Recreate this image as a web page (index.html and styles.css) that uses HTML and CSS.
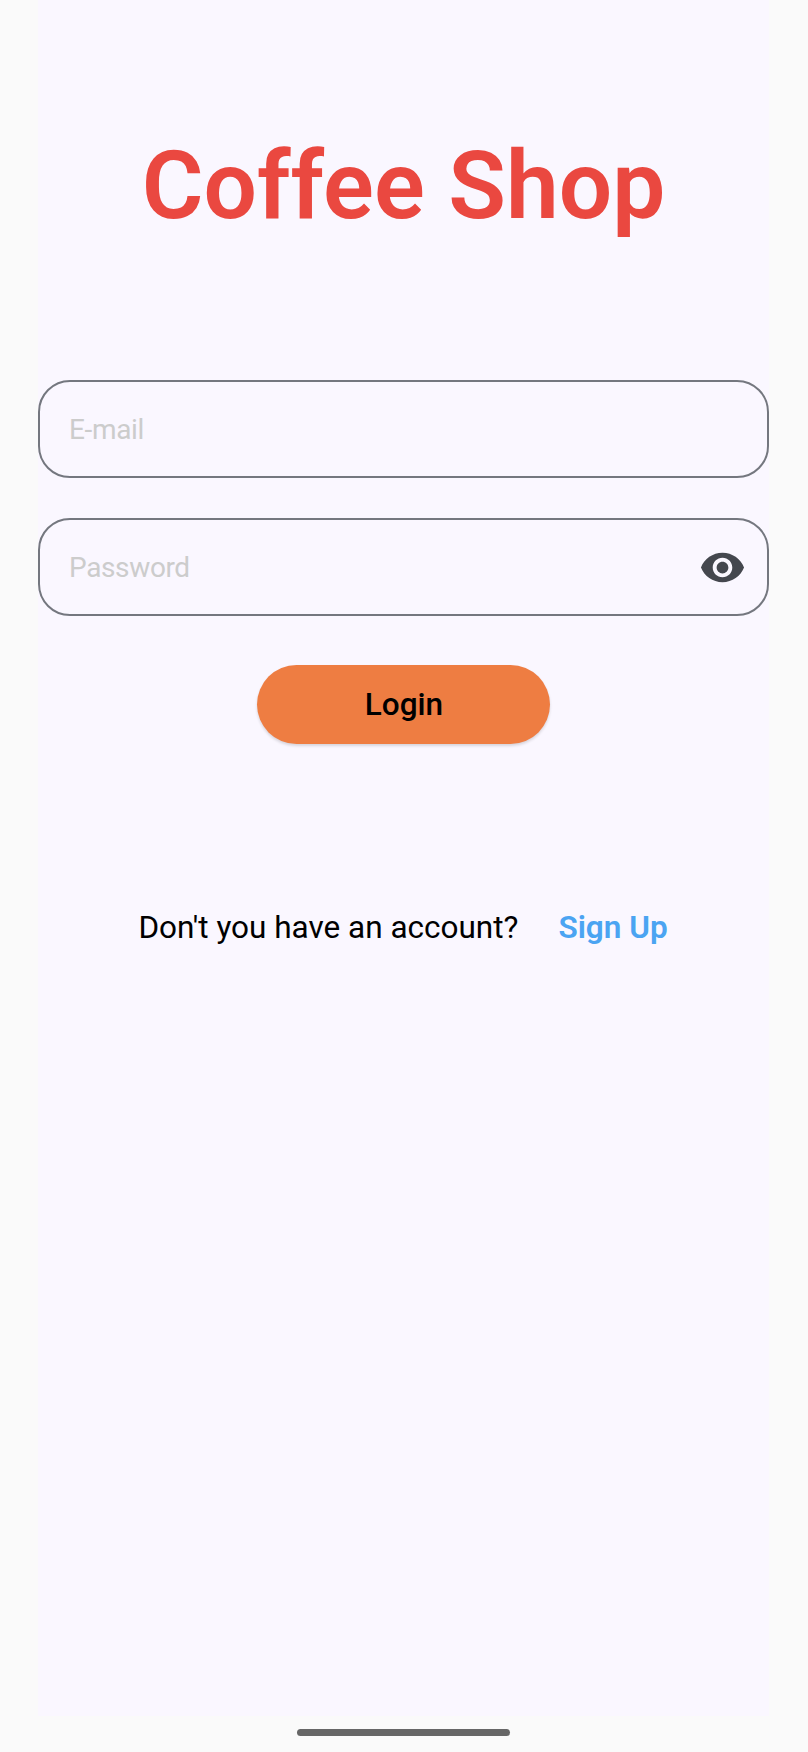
FILE: index.html
```html
<!DOCTYPE html>
<html lang="en">
<head>
<meta charset="utf-8">
<title>Coffee Shop</title>
<link rel="stylesheet" href="styles.css">
</head>
<body>
<main class="screen">
  <h1 class="title">Coffee Shop</h1>
  <form class="form">
    <label class="field"><input class="input" type="email" placeholder="E-mail"></label>
    <label class="field">
      <input class="input" type="password" placeholder="Password">
      <svg class="eye" viewBox="0 0 24 24" aria-hidden="true"><path d="M12 4.5C7 4.5 2.73 7.61 1 12c1.73 4.39 6 7.5 11 7.5s9.27-3.11 11-7.5c-1.73-4.39-6-7.5-11-7.5zM12 17c-2.76 0-5-2.24-5-5s2.24-5 5-5 5 2.24 5 5-2.24 5-5 5zm0-8c-1.66 0-3 1.34-3 3s1.34 3 3 3 3-1.34 3-3-1.34-3-3-3z"/></svg>
    </label>
    <button class="login" type="button">Login</button>
  </form>
  <p class="account"><span>Don't you have an account?</span><a class="signup">Sign Up</a></p>
</main>
<footer class="navbar"><div class="handle"></div></footer>
</body>
</html>
```
FILE: styles.css
```css
* { box-sizing: border-box; }
body {
  margin: 0;
  height: 1752px;
  display: flex;
  flex-direction: column;
  background: #fafafa;
  font-family: Roboto, sans-serif;
  color: #000;
}
.screen {
  width: 731px;
  height: 1716px;
  margin-left: 38px;
  padding-top: 130px;
  display: flex;
  flex-direction: column;
  background: #faf7ff;
}
.title {
  margin: 0;
  font-size: 94.5px;
  line-height: 112px;
  font-weight: 600;
  text-align: center;
  white-space: nowrap;
  color: #ea4840;
}
.form {
  margin-top: 138px;
  display: flex;
  flex-direction: column;
  align-items: center;
}
.field {
  width: 731px;
  height: 98px;
  margin-bottom: 40px;
  padding: 0 21px 0 29px;
  display: flex;
  align-items: center;
  border: 2px solid #74777f;
  border-radius: 32px;
}
.input {
  flex: 1;
  min-width: 0;
  height: 60px;
  padding: 0;
  border: 0;
  outline: 0;
  background: none;
  font: 400 28px Roboto, sans-serif;
  letter-spacing: -.36px;
}
.input::placeholder { color: #ccc; opacity: 1; }
.eye { width: 47px; height: 47px; fill: #44474e; margin-top: 1px; }
.login {
  width: 293px;
  height: 79px;
  margin-top: 8.5px;
  padding: 0 0 0 1px;
  border: 0;
  border-radius: 40px;
  background: #ee7d42;
  box-shadow: 0 2px 3px rgba(0, 0, 0, .14);
  font: 500 31.5px Roboto, sans-serif;
  color: #000;
}
.account {
  margin: 165px 0 0;
  padding-right: 1px;
  display: flex;
  justify-content: center;
  gap: 40px;
  font-size: 31.5px;
  line-height: 38px;
  white-space: nowrap;
}
.signup { font-weight: 600; color: #4ba4f2; }
.navbar {
  width: 807px;
  height: 36px;
  padding-top: 13px;
  display: flex;
  justify-content: center;
}
.handle {
  width: 213px;
  height: 7px;
  border-radius: 4px;
  background: #666;
}
```
